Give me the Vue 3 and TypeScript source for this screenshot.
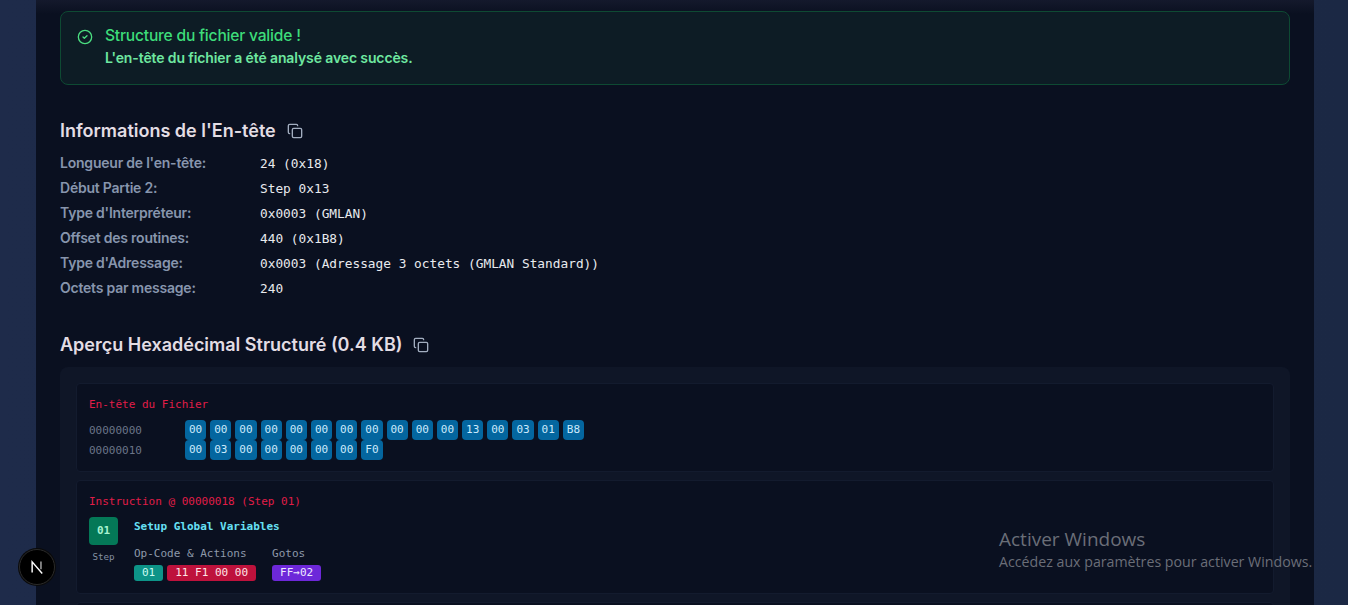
<script setup lang="ts">
interface Info { label: string; value: string }
const infos: Info[] = [
  { label: "Longueur de l'en-tête:", value: '24 (0x18)' },
  { label: 'Début Partie 2:', value: 'Step 0x13' },
  { label: "Type d'Interpréteur:", value: '0x0003 (GMLAN)' },
  { label: 'Offset des routines:', value: '440 (0x1B8)' },
  { label: "Type d'Adressage:", value: '0x0003 (Adressage 3 octets (GMLAN Standard))' },
  { label: 'Octets par message:', value: '240' },
]
const hexRows = [
  { addr: '00000000', bytes: ['00','00','00','00','00','00','00','00','00','00','00','13','00','03','01','B8'] },
  { addr: '00000010', bytes: ['00','03','00','00','00','00','00','F0'] },
]
</script>

<template>
  <div class="page">
    <main class="card">
      <section class="alert">
        <svg class="alert-icon" viewBox="0 0 24 24" fill="none" stroke="currentColor" stroke-width="2" stroke-linecap="round" stroke-linejoin="round">
          <circle cx="12" cy="12" r="10" />
          <path d="m9 12 2 2 4-4" />
        </svg>
        <div>
          <h2 class="alert-title">Structure du fichier valide !</h2>
          <p class="alert-text">L'en-tête du fichier a été analysé avec succès.</p>
        </div>
      </section>

      <h3 class="heading first">
        Informations de l'En-tête
        <svg class="copy" viewBox="0 0 24 24" fill="none" stroke="currentColor" stroke-width="2" stroke-linecap="round" stroke-linejoin="round">
          <rect x="8" y="8" width="14" height="14" rx="2" />
          <path d="M4 16c-1.1 0-2-.9-2-2V4c0-1.1.9-2 2-2h10c1.1 0 2 .9 2 2" />
        </svg>
      </h3>
      <dl class="infos">
        <div v-for="i in infos" :key="i.label" class="info-row">
          <dt>{{ i.label }}</dt>
          <dd>{{ i.value }}</dd>
        </div>
      </dl>

      <h3 class="heading second">
        Aperçu Hexadécimal Structuré (0.4 KB)
        <svg class="copy" viewBox="0 0 24 24" fill="none" stroke="currentColor" stroke-width="2" stroke-linecap="round" stroke-linejoin="round">
          <rect x="8" y="8" width="14" height="14" rx="2" />
          <path d="M4 16c-1.1 0-2-.9-2-2V4c0-1.1.9-2 2-2h10c1.1 0 2 .9 2 2" />
        </svg>
      </h3>
      <div class="hex-panel">
        <section class="block header-block">
          <div class="block-title">En-tête du Fichier</div>
          <div v-for="r in hexRows" :key="r.addr" class="hex-row">
            <span class="addr">{{ r.addr }}</span>
            <span v-for="(b, n) in r.bytes" :key="n" class="byte">{{ b }}</span>
          </div>
        </section>
        <section class="block instr-block">
          <div class="block-title">Instruction @ 00000018 (Step 01)</div>
          <div class="instr">
            <div class="step-col">
              <div class="step">01</div>
              <div class="step-label">Step</div>
            </div>
            <div class="instr-body">
              <div class="instr-name">Setup Global Variables</div>
              <div class="groups">
                <div>
                  <div class="group-label">Op-Code &amp; Actions</div>
                  <div class="chips">
                    <span class="chip teal">01</span>
                    <span class="chip red">11 F1 00 00</span>
                  </div>
                </div>
                <div>
                  <div class="group-label">Gotos</div>
                  <div class="chips">
                    <span class="chip purple">FF→02</span>
                  </div>
                </div>
              </div>
            </div>
          </div>
        </section>
        <section class="block"></section>
      </div>
    </main>

    <button class="next-badge" aria-label="Next.js">
      <svg viewBox="0 0 20 20" width="18" height="18" fill="none">
        <path d="M4.6 16V4.3L15.8 17.2" stroke="#fff" stroke-width="1.6" />
        <path d="M14.4 4v8.5" stroke="#aaa" stroke-width="1.6" />
      </svg>
    </button>

    <div class="watermark">
      <div class="wm-title">Activer Windows</div>
      <div class="wm-text">Accédez aux paramètres pour activer Windows.</div>
    </div>
  </div>
</template>

<style>
html, body { margin: 0; background: #1c2844; overflow: hidden; }
</style>

<style scoped>
.page {
  position: relative;
  height: 605px;
  overflow: hidden;
  box-sizing: border-box;
  padding: 0 34px 0 36px;
  background: linear-gradient(90deg, #1e2b4a 0%, #1b2844 100%);
  font-family: Inter, "Liberation Sans", sans-serif;
}
.card {
  height: 605px;
  box-sizing: border-box;
  padding: 11px 24px 0;
  background: #0a1020;
  position: relative;
}
.card::before {
  content: "";
  position: absolute;
  left: 0; right: 0; top: 0;
  height: 14px;
  background: linear-gradient(180deg, #14192c, rgba(10, 16, 32, 0));
}
.alert {
  position: relative;
  display: flex;
  gap: 12px;
  height: 74px;
  box-sizing: border-box;
  padding: 14px 16px;
  background: #0d1c25;
  border: 1px solid #0e4a33;
  border-radius: 8px;
  color: #4ade80;
}
.alert-icon { width: 16px; height: 16px; margin-top: 3px; flex: none; }
.alert-title { margin: 0; font-size: 15.6px; line-height: 20px; font-weight: 500; color: #3ddc7a; letter-spacing: -0.2px; }
.alert-text { margin: 2px 0 0; font-size: 14px; line-height: 20px; font-weight: 600; color: #6ee7a0; letter-spacing: -0.12px; }
.heading {
  display: flex;
  align-items: center;
  gap: 10px;
  margin: 0;
  font-size: 18px;
  line-height: 28px;
  font-weight: 600;
  color: #e3dde4;
}
.heading.first { margin-top: 32px; }
.heading.second { margin-top: 30px; }
.copy { width: 16px; height: 16px; color: #a3aec0; margin-left: 1px; }
.infos { margin: 6px 0 0; }
.info-row { display: flex; height: 25px; align-items: center; }
.info-row dt { width: 200px; font-size: 14px; line-height: 22px; padding-bottom: 1px; font-weight: 600; color: #8795ad; letter-spacing: -0.22px; }
.info-row dd { margin: 0; font-family: "DejaVu Sans Mono", monospace; font-size: 12.8px; color: #e8eaee; }
.hex-panel {
  margin-top: 8px;
  padding: 16px;
  background: #0f1627;
  border-radius: 8px;
  display: flex;
  flex-direction: column;
  gap: 8px;
  font-family: "DejaVu Sans Mono", monospace;
  font-size: 11px;
}
.block {
  box-sizing: border-box;
  padding: 0 12px;
  background: #0a1020;
  border: 1px solid #131b2e;
  border-radius: 4px;
}
.header-block { height: 89px; padding-top: 14px; }
.instr-block { height: 114px; padding-top: 14px; }
.block:last-child { height: 60px; }
.block-title { color: #e11d48; line-height: 13px; }
.hex-row { display: flex; align-items: center; height: 20px; }
.block-title + .hex-row { margin-top: 9px; }
.addr { width: 96px; color: #6b7588; }
.byte {
  box-sizing: border-box;
  width: 21.2px;
  height: 20px;
  margin-right: 4px;
  border-radius: 4px;
  background: #04669f;
  color: #cbeafc;
  text-align: center;
  line-height: 20px;
}
.instr { display: flex; gap: 16px; margin-top: 9px; }
.step-col { width: 29px; text-align: center; }
.step {
  width: 29px; height: 28px;
  border-radius: 4px;
  background: #047857;
  color: #a7f3d0;
  font-weight: 700;
  line-height: 28px;
}
.step-label { margin-top: 6px; font-size: 9.2px; line-height: 12px; color: #8490a3; }
.instr-name { color: #67e0f5; font-weight: 700; line-height: 18px; margin-top: 1px; }
.groups { display: flex; gap: 16px; margin-top: 11px; }
.group-label { color: #8e99aa; line-height: 14px; }
.chips { display: flex; gap: 4px; margin-top: 4px; }
.chip {
  box-sizing: border-box;
  height: 16px;
  line-height: 16px;
  padding: 0 8px;
  border-radius: 3px;
}
.teal { background: #0d9488; color: #ccfbf1; }
.red { background: #be123c; color: #ffe4e6; }
.purple { background: #6d28d9; color: #ede9fe; }
.next-badge {
  position: absolute;
  left: 19px;
  top: 549px;
  width: 36px;
  height: 36px;
  padding: 0;
  display: flex;
  align-items: center;
  justify-content: center;
  border-radius: 50%;
  background: #000;
  border: 1px solid #2a2a2a;
  box-shadow: 0 0 0 1px #0a0a0a;
}
.watermark {
  position: absolute;
  left: 999px;
  top: 526px;
  font-family: "Open Sans", "Noto Sans", sans-serif;
  color: #6a6e78;
  white-space: nowrap;
}
.wm-title { font-size: 19px; line-height: 26px; }
.wm-text { font-size: 14.2px; line-height: 19px; }
</style>
